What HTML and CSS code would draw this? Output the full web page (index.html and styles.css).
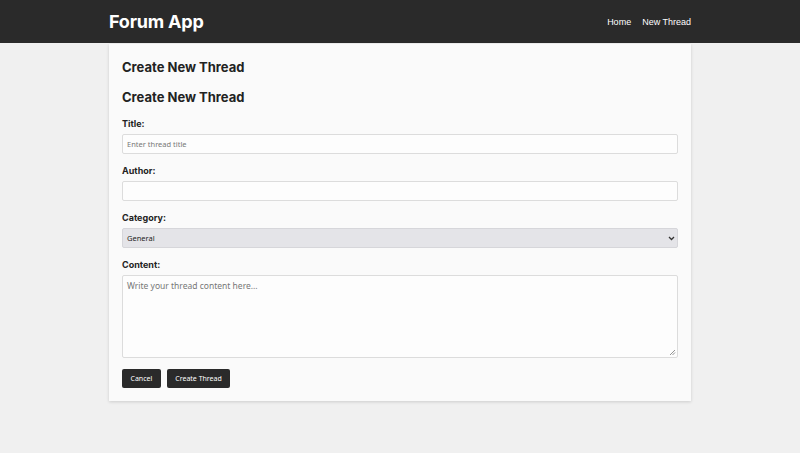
FILE: index.html
```html
<!DOCTYPE html>
<html>
<head>
<meta charset="utf-8">
<link rel="stylesheet" href="styles.css">
</head>
<body>
<header class="topbar">
  <div class="topbar-inner">
    <div class="brand">Forum App</div>
    <nav class="nav">
      <a href="#">Home</a>
      <a href="#">New Thread</a>
    </nav>
  </div>
</header>
<main class="card">
  <h1 class="page-title">Create New Thread</h1>
  <h2 class="page-title second">Create New Thread</h2>
  <form class="form">
    <div class="field">
      <label>Title:</label>
      <input class="input" type="text" placeholder="Enter thread title">
    </div>
    <div class="field">
      <label>Author:</label>
      <input class="input" type="text">
    </div>
    <div class="field">
      <label>Category:</label>
      <div class="select">
        <span>General</span>
        <svg width="7" height="5" viewBox="0 0 7 5"><path d="M1 1l2.5 2.5L6 1" fill="none" stroke="#333" stroke-width="1.3"/></svg>
      </div>
    </div>
    <div class="field">
      <label>Content:</label>
      <div class="textarea">
        <span class="ph">Write your thread content here...</span>
        <svg class="grip" width="7" height="7" viewBox="0 0 7 7"><path d="M6 1L1 6M6 3.5L3.5 6" stroke="#888" stroke-width="0.9"/></svg>
      </div>
    </div>
    <div class="actions">
      <button type="button" class="btn">Cancel</button>
      <button type="button" class="btn">Create Thread</button>
    </div>
  </form>
</main>
</body>
</html>
```

FILE: styles.css
```css
* { box-sizing: border-box; }
html, body { margin: 0; padding: 0; }
body {
  background: #f0f0f0;
  font-family: "Noto Sans", "Liberation Sans", sans-serif;
  color: #222;
  height: 453px;
  overflow: hidden;
}
.topbar {
  background: #2a2a2a;
  height: 43px;
}
.topbar-inner {
  width: 582px;
  margin: 0 auto;
  height: 43px;
  display: flex;
  align-items: center;
  justify-content: space-between;
}
.brand {
  font-family: Inter, "Noto Sans", sans-serif;
  font-weight: 700;
  font-size: 18px;
  color: #fff;
  letter-spacing: -0.2px;
  margin-top: -1px;
}
.nav {
  display: flex;
  gap: 11px;
}
.nav a {
  color: #fff;
  text-decoration: none;
  font-size: 9px;
  font-family: "Liberation Sans", sans-serif;
}
.card {
  width: 582px;
  margin: 1px auto 0;
  background: #fafafa;
  box-shadow: 0 1px 3px rgba(0,0,0,0.15);
  padding: 14px 13px 13px;
}
.page-title {
  font-family: Inter, "Noto Sans", sans-serif;
  font-weight: 700;
  font-size: 13px;
  color: #222;
  margin: 0;
  line-height: 18px;
}
.page-title.second { margin-top: 12px; }
.form { margin-top: 12px; }
.field { margin-bottom: 11px; }
.field label {
  display: block;
  font-family: Inter, "Noto Sans", sans-serif;
  font-weight: 700;
  font-size: 9px;
  color: #222;
  line-height: 12px;
  margin-bottom: 4px;
}
.input {
  display: block;
  width: 100%;
  height: 20px;
  border: 1px solid #dcdcdc;
  border-radius: 2px;
  background: #fdfdfd;
  padding: 0 4px;
  font-family: "Noto Sans", sans-serif;
  font-size: 7.5px;
  color: #333;
  outline: none;
}
.input::placeholder { color: #777; }
.select {
  display: flex;
  align-items: center;
  justify-content: space-between;
  height: 20px;
  border: 1px solid #d6d6da;
  border-radius: 2px;
  background: #e4e4e8;
  padding: 0 2px 0 4px;
  font-size: 7.5px;
  color: #222;
}
.textarea {
  position: relative;
  height: 83px;
  border: 1px solid #dcdcdc;
  border-radius: 2px;
  background: #fdfdfd;
  padding: 4px 4px;
  font-size: 8.5px;
}
.textarea .ph { color: #777; }
.grip { position: absolute; right: 1px; bottom: 1px; }
.actions {
  display: flex;
  gap: 6px;
  margin-top: 0;
}
.btn {
  background: #2a2a2a;
  color: #fff;
  border: none;
  border-radius: 2px;
  height: 19px;
  padding: 0 8.5px;
  font-family: "Noto Sans", sans-serif;
  font-size: 7px;
}
```
